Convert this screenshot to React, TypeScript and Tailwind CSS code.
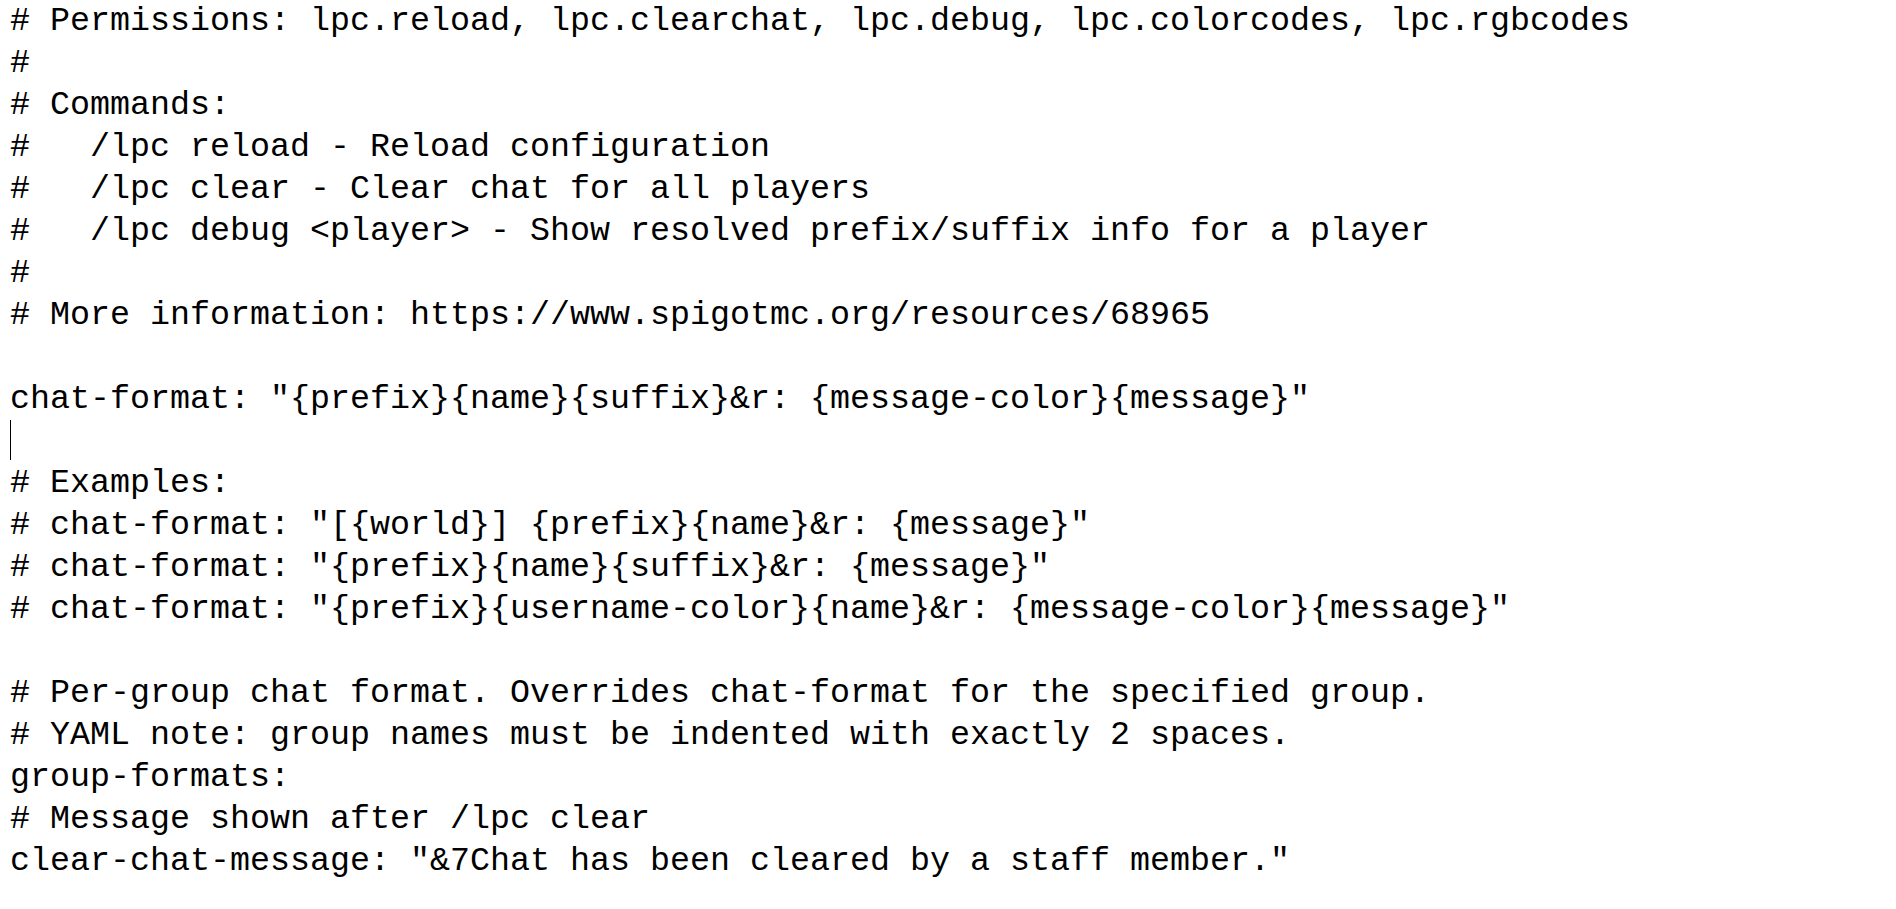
const LINES = [
  '# Permissions: lpc.reload, lpc.clearchat, lpc.debug, lpc.colorcodes, lpc.rgbcodes',
  '#',
  '# Commands:',
  '#   /lpc reload - Reload configuration',
  '#   /lpc clear - Clear chat for all players',
  '#   /lpc debug <player> - Show resolved prefix/suffix info for a player',
  '#',
  '# More information: https://www.spigotmc.org/resources/68965',
  '',
  'chat-format: "{prefix}{name}{suffix}&r: {message-color}{message}"',
  null,
  '# Examples:',
  '# chat-format: "[{world}] {prefix}{name}&r: {message}"',
  '# chat-format: "{prefix}{name}{suffix}&r: {message}"',
  '# chat-format: "{prefix}{username-color}{name}&r: {message-color}{message}"',
  '',
  '# Per-group chat format. Overrides chat-format for the specified group.',
  '# YAML note: group names must be indented with exactly 2 spaces.',
  'group-formats:',
  '# Message shown after /lpc clear',
  'clear-chat-message: "&7Chat has been cleared by a staff member."',
]

export default function App() {
  return (
    <div className="w-[1896px] h-[909px] overflow-hidden bg-white">
      <div className="pl-[10px] font-['Liberation_Mono',monospace] text-[33.33px] leading-[42px] text-black whitespace-pre">
        {LINES.map((line, i) => (
          <div key={i} className="h-[42px]">
            {line === null ? (
              <span className="inline-block w-px h-[40px] bg-black align-top" />
            ) : (
              line
            )}
          </div>
        ))}
      </div>
    </div>
  )
}
